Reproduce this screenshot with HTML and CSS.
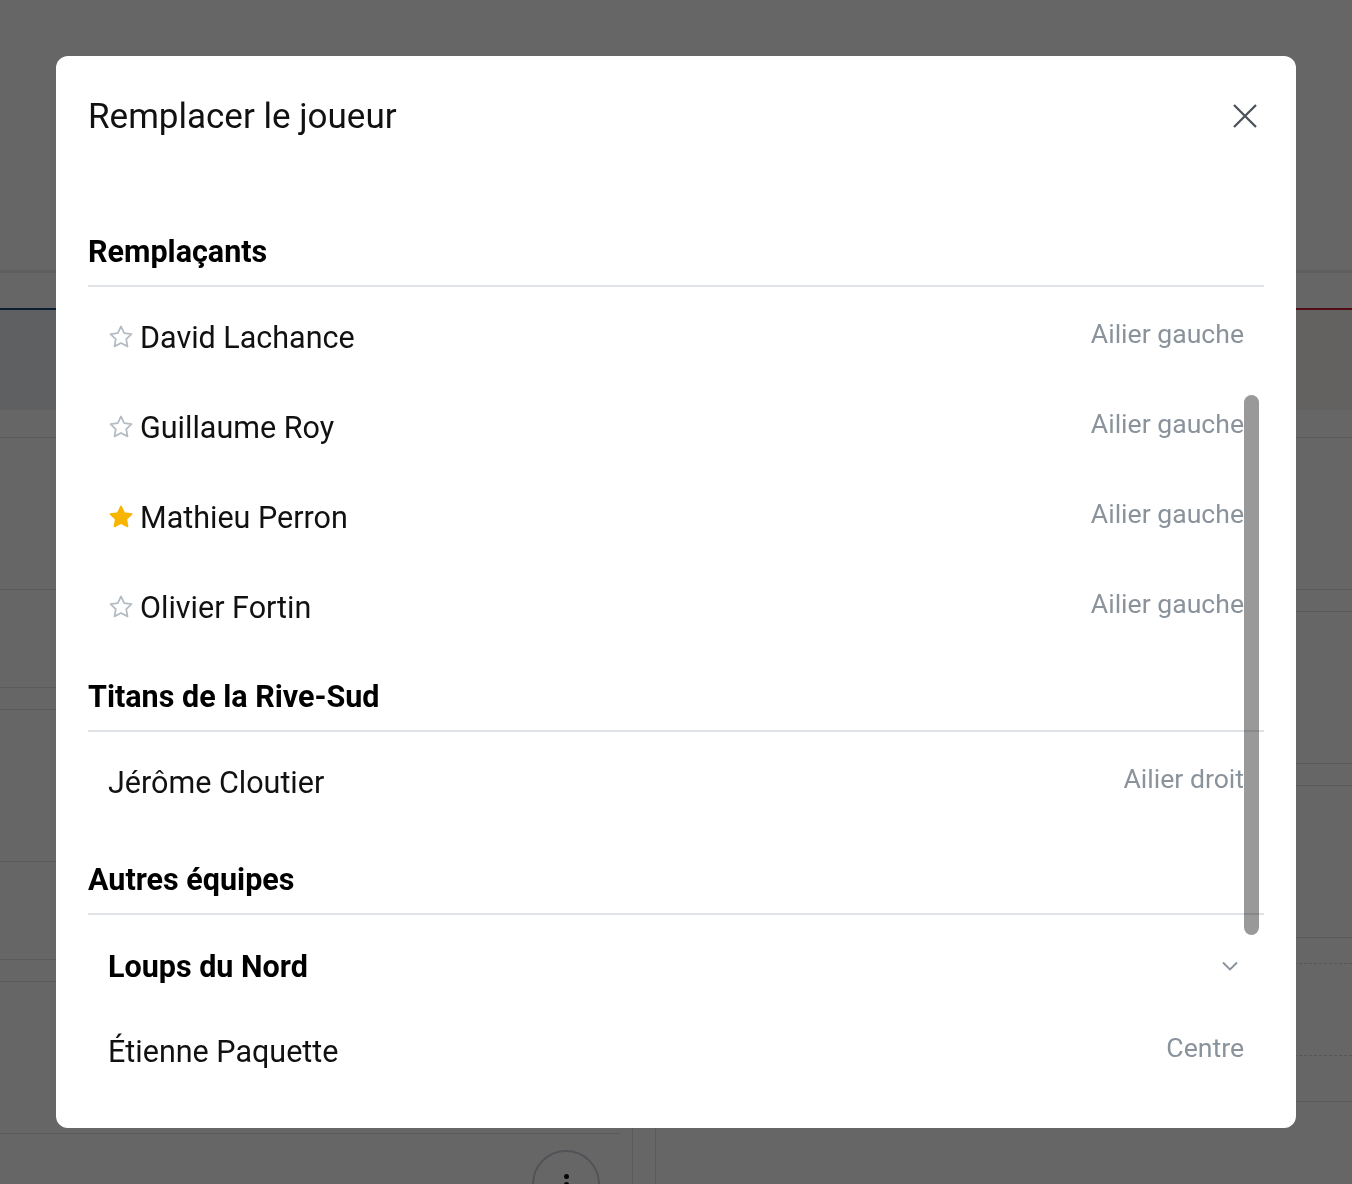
FILE: index.html
```html
<!DOCTYPE html>
<html lang="fr">
<head>
    <meta charset="utf-8">
    <title>Remplacer le joueur</title>
    <link rel="stylesheet" href="styles.css">
</head>
<body>
    <!-- match sheet behind the dialog -->
    <div class="page">
        <div class="page-top"></div>
        <div class="teams">
            <div class="team home"></div>
            <div class="team away"></div>
        </div>
        <div class="board">
            <div class="col left">
                <div class="cell top"></div>
                <div class="cell slot"></div>
                <div class="cell sub"></div>
                <div class="cell gap"></div>
                <div class="cell slot"></div>
                <div class="cell sub"></div>
                <div class="cell gap"></div>
                <div class="cell slot end"></div>
                <div class="foot">
                    <button class="menu-btn"><i></i><i></i><i></i></button>
                </div>
            </div>
            <div class="col right">
                <div class="cell top"></div>
                <div class="cell slot"></div>
                <div class="cell gap"></div>
                <div class="cell slot"></div>
                <div class="cell gap"></div>
                <div class="cell slot"></div>
                <div class="cell dash"></div>
                <div class="cell dash tall"></div>
                <div class="cell rest"></div>
            </div>
        </div>
    </div>

    <div class="overlay">
        <div class="modal">
            <div class="modal-header">
                <h2>Remplacer le joueur</h2>
                <button class="close" aria-label="Fermer">
                    <svg width="24" height="24" viewBox="0 0 24 24"><path d="M1 1L23 23M23 1L1 23"/></svg>
                </button>
            </div>
            <div class="modal-body">
                <section class="group">
                    <h3>Remplaçants</h3>
                    <ul class="players">
                        <li>
                            <svg class="star" width="26" height="26" viewBox="0 0 24 24"><path d="M12 2.3l2.95 6.05 6.75.95-4.9 4.7 1.2 6.65L12 17.5l-6 3.15 1.2-6.65-4.9-4.7 6.75-.95z"/></svg>
                            <span class="name">David Lachance</span>
                            <span class="pos">Ailier gauche</span>
                        </li>
                        <li>
                            <svg class="star" width="26" height="26" viewBox="0 0 24 24"><path d="M12 2.3l2.95 6.05 6.75.95-4.9 4.7 1.2 6.65L12 17.5l-6 3.15 1.2-6.65-4.9-4.7 6.75-.95z"/></svg>
                            <span class="name">Guillaume Roy</span>
                            <span class="pos">Ailier gauche</span>
                        </li>
                        <li>
                            <svg class="star on" width="26" height="26" viewBox="0 0 24 24"><path d="M12 2.3l2.95 6.05 6.75.95-4.9 4.7 1.2 6.65L12 17.5l-6 3.15 1.2-6.65-4.9-4.7 6.75-.95z"/></svg>
                            <span class="name">Mathieu Perron</span>
                            <span class="pos">Ailier gauche</span>
                        </li>
                        <li>
                            <svg class="star" width="26" height="26" viewBox="0 0 24 24"><path d="M12 2.3l2.95 6.05 6.75.95-4.9 4.7 1.2 6.65L12 17.5l-6 3.15 1.2-6.65-4.9-4.7 6.75-.95z"/></svg>
                            <span class="name">Olivier Fortin</span>
                            <span class="pos">Ailier gauche</span>
                        </li>
                    </ul>
                </section>
                <section class="group">
                    <h3>Titans de la Rive-Sud</h3>
                    <ul class="players">
                        <li>
                            <span class="name">Jérôme Cloutier</span>
                            <span class="pos">Ailier droit</span>
                        </li>
                    </ul>
                </section>
                <section class="group others">
                    <h3>Autres équipes</h3>
                    <ul class="players">
                        <li class="team-toggle">
                            <span class="name">Loups du Nord</span>
                            <svg class="chevron" width="28" height="28" viewBox="0 0 24 24"><path d="M6 9l6 6 6-6"/></svg>
                        </li>
                        <li>
                            <span class="name">Étienne Paquette</span>
                            <span class="pos">Centre</span>
                        </li>
                    </ul>
                </section>
            </div>
            <div class="scroll-thumb"></div>
        </div>
    </div>
</body>
</html>
```

FILE: styles.css
```css
* {
    box-sizing: border-box;
}

body {
    margin: 0;
    font-family: Roboto, "Noto Sans", Arial, sans-serif;
    background-color: #fff;
    color: #111;
}

/* page underneath */
.page {
    height: 1184px;
    overflow: hidden;
}

.page-top {
    height: 273px;
    border-bottom: 3px solid #eeeeee;
}

.teams {
    display: flex;
    height: 102px;
    margin-top: 35px;
}

.team {
    flex: 1;
}

.team.home {
    border-top: 2px solid #1f4d7c;
    background-color: #eceff3;
}

.team.away {
    border-top: 2px solid #cc1e36;
    background-color: #fbf3f3;
}

.board {
    display: flex;
    gap: 22px;
}

.col.left {
    width: 633px;
    border-right: 1px solid #e2e2e2;
}

.col.right {
    flex: 1;
    border-left: 1px solid #e2e2e2;
}

.cell {
    border-bottom: 1px solid #e2e2e2;
}

.cell.top { height: 28px; }
.cell.slot { height: 152px; }
.cell.sub { height: 98px; }
.cell.gap { height: 22px; }
.cell.rest { height: 46px; }

.cell.end {
    margin-right: 12px;
}

.cell.dash {
    height: 26px;
    border-bottom: 1px dashed #d8d8d8;
}

.cell.dash.tall {
    height: 92px;
}

.foot {
    display: flex;
    justify-content: flex-end;
    padding: 16px 32px 0 0;
}

.menu-btn {
    width: 68px;
    height: 68px;
    border: 2px solid #c7ced6;
    border-radius: 50%;
    background: #fff;
    display: flex;
    flex-direction: column;
    align-items: center;
    justify-content: center;
    gap: 3px;
    padding: 0;
}

.menu-btn i {
    width: 5px;
    height: 5px;
    border-radius: 50%;
    background-color: #111;
}

/* dialog */
.overlay {
    position: fixed;
    inset: 0;
    background-color: rgba(0, 0, 0, 0.6);
    padding: 56px;
    display: flex;
}

.modal {
    flex: 1;
    position: relative;
    background-color: #fff;
    border-radius: 12px;
    overflow: hidden;
}

.modal-header {
    display: flex;
    justify-content: space-between;
    align-items: center;
    padding: 41px 35px 0 32px;
}

.modal-header h2 {
    margin: 0;
    font-size: 35px;
    line-height: 40px;
    font-weight: 400;
    color: #111;
}

.close {
    border: none;
    background: none;
    padding: 4px;
    margin-top: -2px;
    cursor: pointer;
    display: flex;
}

.close svg {
    fill: none;
    stroke: #4a525b;
    stroke-width: 2.3;
}

.modal-body {
    padding: 0 32px;
    margin-top: 97px;
}

.group + .group {
    margin-top: 27px;
}

.group.others {
    margin-top: 35px;
}

.group h3 {
    margin: 0;
    font-size: 30.5px;
    line-height: 36px;
    font-weight: 700;
    color: #000;
    padding-bottom: 15px;
    border-bottom: 2px solid #dfe3e7;
}

.players {
    list-style: none;
    margin: 0;
    padding: 5px 0 0;
}

.players li {
    display: flex;
    align-items: center;
    height: 90px;
    padding: 0 20px;
}

.star {
    margin-right: 6px;
    fill: none;
    stroke: #b3bbc3;
    stroke-width: 1.6;
    stroke-linejoin: round;
}

.star.on {
    fill: #f7b500;
    stroke: #f7b500;
}

.name {
    font-size: 30.5px;
    color: #111;
}

.pos {
    margin-left: auto;
    margin-bottom: 8px;
    font-size: 26.6px;
    color: #8a939c;
}

.players li.team-toggle {
    height: 86px;
    padding-top: 6px;
}

.team-toggle .name {
    font-weight: 700;
    color: #000;
}

.chevron {
    margin-left: auto;
    fill: none;
    stroke: #87919b;
    stroke-width: 1.6;
}

.scroll-thumb {
    position: absolute;
    top: 339px;
    right: 37px;
    width: 15px;
    height: 540px;
    border-radius: 8px;
    background-color: rgba(0, 0, 0, 0.4);
}
```
